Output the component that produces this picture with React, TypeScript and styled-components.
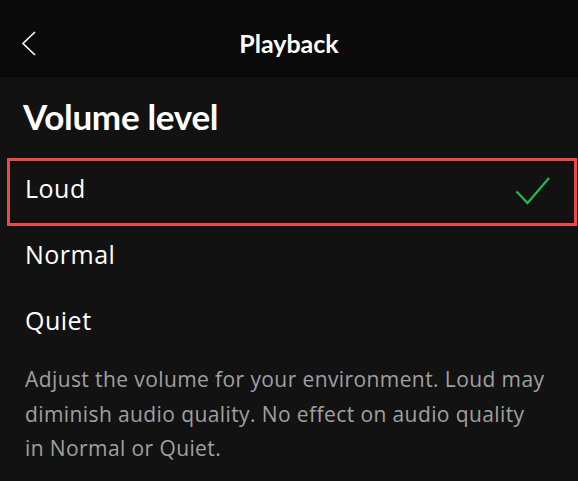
import styled, { createGlobalStyle } from "styled-components";

const GlobalStyle = createGlobalStyle`
    html, body {
        margin: 0;
        padding: 0;
        background: #121212;
    }
    body {
        font-family: "Open Sans", "Noto Sans", sans-serif;
        -webkit-font-smoothing: antialiased;
    }
`

const Page = styled.main`
    width: 578px;
    height: 481px;
    overflow: hidden;
    background: #121212;
    color: #ffffff;
`

const Header = styled.header`
    display: grid;
    grid-template-columns: 64px 1fr 64px;
    align-items: center;
    box-sizing: border-box;
    height: 77px;
    padding-top: 9px;
    background: #0a0a0a;
`

const BackButton = styled.button`
    display: flex;
    align-items: center;
    padding: 0 0 0 21px;
    height: 100%;
    background: none;
    border: none;
    cursor: pointer;
`

const HeaderTitle = styled.h1`
    margin: 0;
    text-align: center;
    font-family: "Lato", sans-serif;
    font-size: 25px;
    font-weight: 700;
    color: #ffffff;
`

const Title = styled.h2`
    margin: 0;
    padding-left: 23px;
    height: 78px;
    line-height: 78px;
    font-family: "Lato", sans-serif;
    font-size: 35px;
    font-weight: 700;
    letter-spacing: -0.3px;
`

const Options = styled.ul`
    margin: 0;
    padding: 0;
    list-style: none;
`

interface OptionProps {
    selected: boolean;
}

const Option = styled.li<OptionProps>`
    position: relative;
    display: flex;
    align-items: center;
    justify-content: space-between;
    height: 66px;
    padding: 0 27px 0 25px;
    font-size: 25px;
    font-weight: 400;
    letter-spacing: 0.5px;
    color: #ffffff;

    &::after {
        content: "";
        display: ${props => props.selected ? "block" : "none"};
        position: absolute;
        top: 3px;
        bottom: -5px;
        left: 7px;
        right: 1px;
        border: 3px solid #f0474b;
        pointer-events: none;
    }
`

const Check = styled.svg`
    margin-top: 6px;
`

const Description = styled.p`
    margin: 9px 0 0;
    padding: 0 31px 0 25px;
    font-size: 21px;
    line-height: 34.5px;
    letter-spacing: 0.4px;
    color: #a0a0a0;
`

const options = ["Loud", "Normal", "Quiet"];

export default function App() {
    return (
        <Page>
            <GlobalStyle />
            <Header>
                <BackButton aria-label="Back">
                    <svg width="16" height="25" viewBox="0 0 16 25" fill="none">
                        <path d="M14 1 L2 12.5 L14 24" stroke="#ffffff" strokeWidth="1.6" />
                    </svg>
                </BackButton>
                <HeaderTitle>Playback</HeaderTitle>
                <span />
            </Header>
            <Title>Volume level</Title>
            <Options>
                {options.map(name => (
                    <Option key={name} selected={name === "Loud"}>
                        {name}
                        {name === "Loud" && (
                            <Check width="36" height="30" viewBox="0 0 36 30" fill="none">
                                <path d="M1.5 15.5 L12.5 27 L34 2" stroke="#1db954" strokeWidth="2.2" />
                            </Check>
                        )}
                    </Option>
                ))}
            </Options>
            <Description>
                Adjust the volume for your environment. Loud may diminish audio quality. No effect on audio quality in Normal or Quiet.
            </Description>
        </Page>
    );
}
